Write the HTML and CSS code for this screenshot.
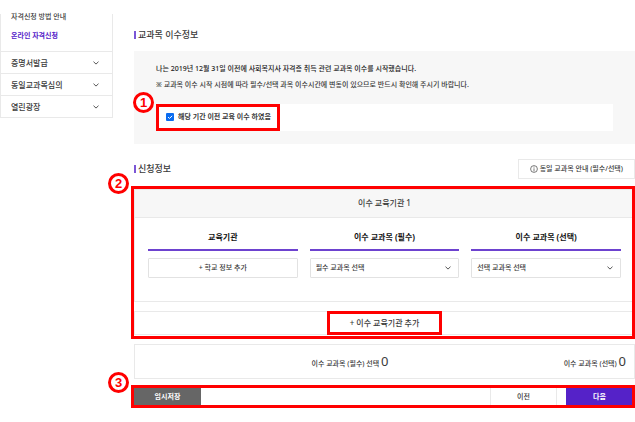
FILE: index.html
```html
<!DOCTYPE html>
<html lang="ko">
<head>
<meta charset="utf-8">
<meta name="viewport" content="width=device-width, initial-scale=1">
<title>온라인 자격신청</title>
<link rel="stylesheet" href="styles.css">
</head>
<body>
<div class="page">
  <nav class="side">
    <div class="side-sub">
      <a href="#guide">자격신청 방법 안내</a>
      <a href="#apply" class="current">온라인 자격신청</a>
    </div>
    <a class="side-row" href="#cert">증명서발급<svg class="chev" viewBox="0 0 6 4"><path d="M.5 .7 3 3.1 5.500 .7"/></svg></a>
    <a class="side-row" href="#review">동일교과목심의<svg class="chev" viewBox="0 0 6 4"><path d="M.5 .7 3 3.1 5.500 .7"/></svg></a>
    <a class="side-row" href="#plaza">열린광장<svg class="chev" viewBox="0 0 6 4"><path d="M.5 .7 3 3.1 5.500 .7"/></svg></a>
  </nav>

  <main class="main">
    <h2 class="title">교과목 이수정보</h2>
    <section class="info">
      <p class="strong">나는 2019년 12월 31일 이전에 사회복지사 자격증 취득 관련 교과목 이수를 시작했습니다.</p>
      <p>※ 교과목 이수 시작 시점에 따라 필수/선택 과목 이수시간에 변동이 있으므로 반드시 확인해 주시기 바랍니다.</p>
      <div class="agree">
        <label class="check">
          <input type="checkbox" checked>
          <svg class="tick" viewBox="0 0 8 8"><path d="M2 4.100 3.500 5.400 6.200 2.800"/></svg>
          <span>해당 기간 이전 교육 이수 하였음</span>
        </label>
        <span class="badge badge-info">1</span>
      </div>
    </section>

    <div class="title-bar">
      <h2 class="title">신청정보</h2>
      <button type="button" class="guide"><svg class="info-icon" viewBox="0 0 8 8"><circle cx="4" cy="4" r="3.400"/><path d="M4 1.700v.9M4 3.300v3"/></svg>동일 교과목 안내 (필수/선택)</button>
    </div>

    <section class="group">
      <div class="panel">
        <h3 class="panel-head">이수 교육기관 1</h3>
        <div class="cols">
          <div class="col">
            <h4>교육기관</h4>
            <button type="button" class="field">+ 학교 정보 추가</button>
          </div>
          <div class="col">
            <h4><label for="required">이수 교과목 (필수)</label></h4>
            <div class="pick">
              <select id="required" class="field"><option>필수 교과목 선택</option></select>
              <svg class="chev" viewBox="0 0 6 4"><path d="M.5 .7 3 3.1 5.500 .7"/></svg>
            </div>
          </div>
          <div class="col">
            <h4><label for="elective">이수 교과목 (선택)</label></h4>
            <div class="pick">
              <select id="elective" class="field"><option>선택 교과목 선택</option></select>
              <svg class="chev" viewBox="0 0 6 4"><path d="M.5 .7 3 3.1 5.500 .7"/></svg>
            </div>
          </div>
        </div>
      </div>
      <div class="add-row">
        <button type="button" class="add">+ 이수 교육기관 추가</button>
      </div>
      <span class="frame frame-group"></span>
      <span class="badge badge-side">2</span>
    </section>

    <section class="summary">
      <p>이수 교과목 (필수) 선택 <b>0</b></p>
      <p>이수 교과목 (선택) <b>0</b></p>
    </section>

    <div class="actions">
      <button type="button" class="act save">임시저장</button>
      <button type="button" class="act prev">이전</button>
      <button type="button" class="act next">다음</button>
      <span class="frame frame-actions"></span>
      <span class="badge badge-side">3</span>
    </div>
  </main>
</div>
</body>
</html>
```

FILE: styles.css
```css
:root {
  --line: #e9e9e9;
  --text: #3a3a3a;
  --purple: #5522c8;
  --mark: #f00;
  --soft: #f7f7f7;
}

* {
  box-sizing: border-box;
}

body {
  margin: 0;
  background: #fff;
  color: var(--text);
  font: 500 7px/16px "Noto Sans", "Noto Sans CJK KR", sans-serif;
}

h2, h3, h4, p {
  margin: 0;
}

a {
  color: inherit;
  text-decoration: none;
}

button, select {
  margin: 0;
  padding: 0;
  border: 0;
  border-radius: 0;
  background: #fff;
  color: inherit;
  font: inherit;
}

.page {
  display: flex;
  gap: 21px;
  padding-bottom: 14px;
}

.chev {
  width: 6px;
  height: 4px;
  fill: none;
  stroke: #555;
}

/* Side menu */
.side {
  flex: 0 0 113px;
  align-self: flex-start;
  margin-top: 14px;
  border: 1px solid var(--line);
  border-top: 0;
}

.side-sub {
  display: flex;
  flex-direction: column;
  gap: 3px;
  margin-top: -5px;
  padding: 0 10px 7px;
}

.current {
  color: var(--purple);
  font-weight: 700;
}

.side-row {
  display: flex;
  align-items: center;
  justify-content: space-between;
  padding: 3px 13px 3px 10px;
  border-top: 1px solid var(--line);
  font-size: 8px;
  line-height: 15px;
}

/* Main column */
.main {
  flex: 1;
  min-width: 0;
  padding-top: 28px;
}

.title {
  display: flex;
  align-items: center;
  gap: 2px;
  font-size: 9px;
  font-weight: 500;
  line-height: 14px;
}

.title::before {
  content: "";
  width: 2px;
  height: 8px;
  background: #7b56d6;
}

.info {
  margin-top: 9px;
  padding: 10px 22px 13px;
  background: var(--soft);
}

.strong {
  color: #222;
}

.agree {
  position: relative;
  margin-top: 11px;
  background: #fff;
}

.check {
  position: relative;
  display: inline-flex;
  align-items: center;
  gap: 4px;
  padding: 2px 6px 3px 7px;
  border: 3px solid var(--mark);
  font-weight: 700;
  vertical-align: top;
}

.check input {
  appearance: none;
  width: 8px;
  height: 8px;
  margin: 0;
  border-radius: 1px;
  background: #0b6cf0;
}

.tick {
  position: absolute;
  left: 7px;
  width: 8px;
  height: 8px;
  fill: none;
  stroke: #fff;
}

.title-bar {
  display: flex;
  align-items: center;
  justify-content: space-between;
  margin-top: 15px;
}

.guide {
  display: flex;
  align-items: center;
  gap: 2px;
  padding: 1px 11px;
  border: 1px solid var(--line);
}

.info-icon {
  width: 8px;
  height: 8px;
  fill: none;
  stroke: #444;
  stroke-width: .7;
}

.group {
  position: relative;
  margin-top: 10px;
}

.panel, .add-row {
  border: 1px solid var(--line);
}

.panel-head {
  padding: 5px 0 6px;
  border-bottom: 1px solid var(--line);
  background: var(--soft);
  font-size: 8px;
  font-weight: 500;
  text-align: center;
}

.cols {
  display: grid;
  grid-template-columns: repeat(3, 1fr);
  gap: 12px;
  padding: 11px 13px 23px;
}

.col h4 {
  padding-bottom: 4px;
  border-bottom: 2px solid #6d42cf;
  color: #111;
  font-size: 8px;
  font-weight: 700;
  text-align: center;
}

.field {
  display: block;
  width: 100%;
  padding: 1px 5px;
  border: 1px solid #e2e2e2;
  border-radius: 1px;
  appearance: none;
}

.col > .field, .pick {
  margin-top: 7px;
}

.pick {
  position: relative;
}

.pick .chev {
  position: absolute;
  top: 8px;
  right: 8px;
  pointer-events: none;
}

.add-row {
  display: flex;
  justify-content: center;
  margin-top: 9px;
}

.add {
  margin: -1px 0;
  padding: 1px 20px;
  border: 3px solid var(--mark);
  font-size: 8px;
  line-height: 16px;
}

.summary {
  display: grid;
  grid-template-columns: repeat(2, 1fr);
  margin-top: 9px;
  padding: 10px 8px 5px 16px;
  border: 1px solid var(--line);
  text-align: right;
  line-height: 18px;
}

.summary b {
  font-size: 13px;
  font-weight: 400;
  line-height: 13px;
}

.actions {
  position: relative;
  display: flex;
  margin-top: 9px;
  padding-right: 2px;
}

.act {
  width: 67px;
  line-height: 17px;
}

.save {
  margin-right: auto;
  background: #666;
  color: #fff;
  font-weight: 700;
}

.prev {
  margin-right: 9px;
  border: solid var(--line);
  border-width: 0 1px;
}

.next {
  background: var(--purple);
  color: #fff;
  font-weight: 700;
}

/* Step markers drawn over the form */
.frame {
  position: absolute;
  border: 3px solid var(--mark);
  pointer-events: none;
}

.frame-group {
  inset: -3px 0 -4px -3px;
}

.frame-actions {
  inset: -3px 0 -3px -3px;
}

.badge {
  position: absolute;
  width: 21px;
  height: 21px;
  border: 3px solid var(--mark);
  border-radius: 50%;
  background: #fff;
  color: var(--mark);
  font: 700 13px/15px "Liberation Sans", sans-serif;
  text-align: center;
}

.badge-info {
  top: -12px;
  left: -23px;
}

.badge-side {
  top: -16px;
  left: -26px;
}
```
